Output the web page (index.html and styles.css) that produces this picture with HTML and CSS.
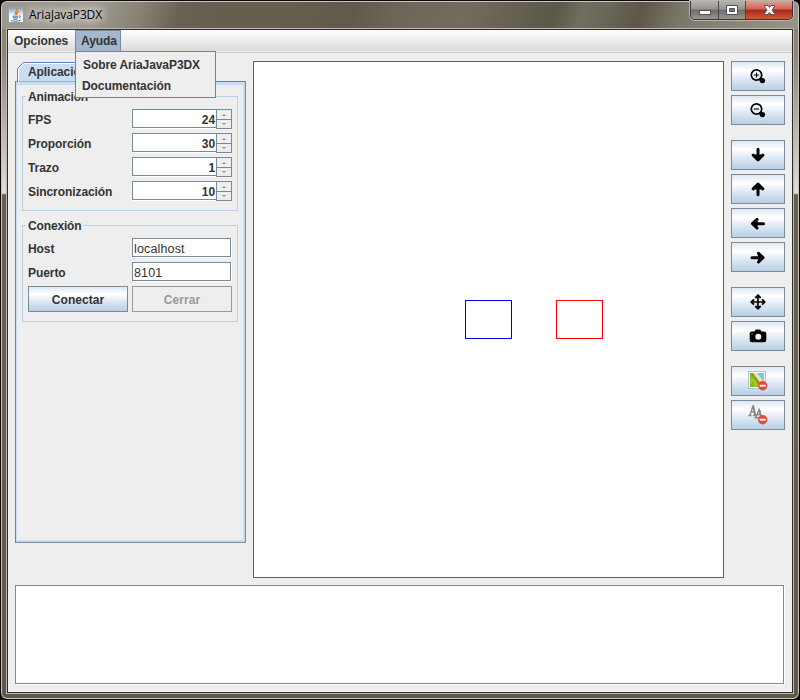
FILE: index.html
```html
<!DOCTYPE html>
<html lang="es">
<head>
<meta charset="utf-8">
<title>AriaJavaP3DX</title>
<link rel="stylesheet" href="styles.css">
</head>
<body>
<div class="window">
  <header class="titlebar">
    <svg class="app-icon" width="16" height="16" viewBox="0 0 16 16">
      <defs><linearGradient id="ic" x1="0" y1="0" x2="0" y2="1"><stop offset="0" stop-color="#7d9ab2"/><stop offset=".5" stop-color="#f4f7f9"/><stop offset="1" stop-color="#fff"/></linearGradient></defs>
      <rect x=".5" y=".5" width="15" height="15" fill="url(#ic)" stroke="#8ba3b5"/>
      <path d="M8.500 2C10 4 6 5 7.500 8M10.500 4.500C8.500 5.500 8.500 6.500 9 8" fill="none" stroke="#e8842c" stroke-width="1.500"/>
      <path d="M4.500 9.200h6M5 10.800h5M5.500 12.200h4M3 13.500c3 1 7 1 9.500-.3M11 9c2-.8 2 1.500 0 2" fill="none" stroke="#4f7594" stroke-width="1"/>
    </svg>
    <span class="title">AriaJavaP3DX</span>
    <div class="controls">
      <div class="ctl ctl-min"><svg width="28" height="18"><rect x="8.500" y="9.500" width="11" height="4" fill="#fff" stroke="#51505f"/></svg></div>
      <div class="ctl ctl-max"><svg width="27" height="18"><path d="M7.500 4.500h11v9h-11zM10.500 7.500v3h5v-3z" fill="#fff" fill-rule="evenodd" stroke="#51505f"/></svg></div>
      <div class="ctl ctl-close"><svg width="46" height="18"><path d="M18.500 4.500h3.500l1.500 2 1.500-2h3.500v1l-2.500 3.500 2.500 3.500v1H25l-1.500-2-1.500 2h-3.500v-1L21 9l-2.500-3.500z" fill="#fff" stroke="#5b4a57"/></svg></div>
    </div>
  </header>
  <div class="client">
    <nav class="menubar">
      <div class="menu menu-options">Opciones</div>
      <div class="menu menu-help">Ayuda
        <div class="popup">
          <div class="item item-about">Sobre AriaJavaP3DX</div>
          <div class="item item-docs">Documentación</div>
        </div>
      </div>
    </nav>
    <main class="workspace">
      <aside class="side">
        <div class="tab"><svg width="90" height="20"><path d="M.5 20V6.500L6.500.5H90V20z" fill="#c8ddf2" stroke="#6382bf"/><path d="M1.500 20V7L7 1.500H90" fill="none" stroke="#fff"/></svg><span>Aplicación</span></div>
        <div class="tabpane">
          <section class="group animation">
            <h2>Animación</h2>
            <div class="row"><label>FPS</label><div class="spinner"><div class="value">24</div><div class="arrows"><i></i><i></i></div></div></div>
            <div class="row"><label>Proporción</label><div class="spinner"><div class="value">30</div><div class="arrows"><i></i><i></i></div></div></div>
            <div class="row"><label>Trazo</label><div class="spinner"><div class="value">1</div><div class="arrows"><i></i><i></i></div></div></div>
            <div class="row"><label>Sincronización</label><div class="spinner"><div class="value">10</div><div class="arrows"><i></i><i></i></div></div></div>
          </section>
          <section class="group connection">
            <h2>Conexión</h2>
            <div class="row"><label>Host</label><div class="field">localhost</div></div>
            <div class="row"><label>Puerto</label><div class="field">8101</div></div>
            <div class="actions"><div class="button connect"><span>Conectar</span></div><div class="button disabled"><span>Cerrar</span></div></div>
          </section>
        </div>
      </aside>
      <div class="canvas">
        <svg width="469" height="515"><rect x="211.500" y="238.500" width="46" height="38" fill="none" stroke="#0000f0"/><rect x="302.500" y="238.500" width="46" height="38" fill="none" stroke="#f00"/></svg>
      </div>
      <div class="tools">
        <div class="button tool"><svg width="16" height="16" viewBox="0 0 16 16"><circle cx="6.500" cy="7" r="5.200" fill="none" stroke="#000" stroke-width="1.700"/><path d="M3.900 7h5.200M6.500 4.400v5.200" stroke="#000" stroke-width="1.100"/><path d="M10 10.500l2 2" stroke="#000" stroke-width="3.600"/><circle cx="12.400" cy="12.600" r="2.700"/></svg></div>
        <div class="button tool"><svg width="16" height="16" viewBox="0 0 16 16"><circle cx="6.500" cy="7" r="5.200" fill="none" stroke="#000" stroke-width="1.700"/><path d="M3.900 7h5.200" stroke="#000" stroke-width="1.100"/><path d="M10 10.500l2 2" stroke="#000" stroke-width="3.600"/><circle cx="12.400" cy="12.600" r="2.700"/></svg></div>
        <div class="button tool gap"><svg width="16" height="16" viewBox="0 0 16 16"><path d="M8 2.300v10M3.200 8.200L8 12.800l4.800-4.600M5 9h6" fill="none" stroke="#000" stroke-width="3" stroke-linecap="round" stroke-linejoin="round"/></svg></div>
        <div class="button tool"><svg width="16" height="16" viewBox="0 0 16 16"><path d="M8 13.700v-10M3.200 7.800L8 3.200l4.800 4.600M5 7h6" fill="none" stroke="#000" stroke-width="3" stroke-linecap="round" stroke-linejoin="round"/></svg></div>
        <div class="button tool"><svg width="16" height="16" viewBox="0 0 16 16"><path d="M13.500 8.700h-10M7 4.400L2.500 8.700 7 13M6.200 6v5" fill="none" stroke="#000" stroke-width="3" stroke-linecap="round" stroke-linejoin="round"/></svg></div>
        <div class="button tool"><svg width="16" height="16" viewBox="0 0 16 16"><path d="M2 8.700h10M8.500 4.400L13 8.700 8.500 13M9.300 6v5" fill="none" stroke="#000" stroke-width="3" stroke-linecap="round" stroke-linejoin="round"/></svg></div>
        <div class="button tool gap"><svg width="16" height="16" viewBox="0 0 16 16"><path d="M8 1.500v13M1.500 8h13" stroke="#000" stroke-width="1.700"/><path d="M5.300 4L8 1.300 10.700 4M5.300 12L8 14.700l2.700-2.700M4 5.300L1.300 8 4 10.700M12 5.300L14.700 8 12 10.700" fill="none" stroke="#000" stroke-width="1.800"/></svg></div>
        <div class="button tool"><svg width="18" height="16" viewBox="0 0 18 16"><path d="M3 3.500h2.500L6.800 1.500h4.400l1.300 2H15q2.300 0 2.300 2V12q0 2.300-2.300 2.300H3Q.7 14.300.7 12V5.500q0-2 2.300-2z"/><circle cx="9.300" cy="8.700" r="3" fill="#edf4fa"/><circle cx="3" cy="5.800" r=".6" fill="#edf4fa"/></svg></div>
        <div class="button tool gap"><svg width="20" height="20" viewBox="0 0 20 20"><rect x=".5" y="0.500" width="17" height="17" fill="#fff" stroke="#a4c7d9"/><path d="M2 2h14v14H2z" fill="#69ad28"/><path d="M7 2h9v12z" fill="#75c7ed"/><path d="M5 2h4l7 9v6z" fill="#f8dfa6"/><path d="M2 2h3l8 12v2H2z" fill="#86bd18"/><path d="M2 13l5-8M7 16V8M2 7l9 9" stroke="#c3d446" stroke-width=".8"/><path d="M3.500 3l9 11" stroke="#bf5826"/><circle cx="14.700" cy="14.700" r="4.700" fill="#e44a3b"/><path d="M11.700 14.700h6" stroke="#fff" stroke-width="1.800"/></svg></div>
        <div class="button tool"><svg width="20" height="20" viewBox="0 0 20 20"><g fill="none" stroke="#888" stroke-width="1.400"><path d="M.5 10.500h3M5 10.500h3.500M2 10L5 .8 7 10.500M3.300 6.800h3M5.500.8l2 9"/><path d="M6.500 12.800h3M9.500 12.800h4M8 12.500l3-8 2 8M9 9.500h4M11.500 4.500l2 8"/></g><circle cx="14.700" cy="14.700" r="4.700" fill="#e44a3b"/><path d="M11.700 14.700h6" stroke="#fff" stroke-width="1.800"/></svg></div>
      </div>
    </main>
    <div class="console"></div>
  </div>
</div>
</body>
</html>
```
FILE: styles.css
```css
* { box-sizing: border-box; }
html, body { margin: 0; background: #0a0a0a; }
body { width: 800px; height: 700px; overflow: hidden; color: #333; font: bold 12px/16px "Liberation Sans", Arial, sans-serif; letter-spacing: -.07px; }
svg { display: block; flex: none; }
.window {
  width: 800px; height: 700px; padding: 0 6px 5px; border: 1px solid #0b090b; border-radius: 7px;
  box-shadow: inset 0 0 0 1px #cbc7be;
  background:
    linear-gradient(110deg, #9c978c 0, #a09b90 90px, #878176 135px, #6a6355 170px, #665f50 210px, #665f50 270px, #5f5a4b 335px, #6b6558 370px, #736b60 440px, #5b5848 525px, #716d60 550px, #69655a 575px, #5c5748 605px, #7d786c 645px, #8a867a 700px, #99958a) 0 0 / 100% 28px no-repeat,
    linear-gradient(#8b8377, #8b8377 50px, #e0dcd8 192px, #665f50 194px, #665f50 400px, #5d5848);
}
.titlebar { display: flex; height: 27px; padding: 6px 0 0 1px; }
.title { margin: 0 0 0 5px; color: #000; font: 12px/16px "Open Sans", "Liberation Sans", sans-serif; text-shadow: 0 0 8px #fff, 0 0 10px #eee, 0 0 14px #ccc; letter-spacing: -.12px; }
.controls { display: flex; height: 19px; margin: -6px 0 0 auto; border: 1px solid #38363a; border-top: 0; border-radius: 0 0 5px 5px; box-shadow: 0 0 0 1px #b9b5ab; overflow: hidden; }
.ctl { border-right: 1px solid #45434a; background: linear-gradient(#b5b3ae, #96948f 45%, #6e6c67 50%, #99968c); }
.ctl-min { width: 28px; }
.ctl-max { width: 27px; }
.ctl-close { width: 46px; border: 0; background: linear-gradient(#dfa092, #c96651 45%, #aa281a 50%, #cf5838); }
.client { display: flex; flex-direction: column; width: 786px; height: 664px; border: 1px solid #2f2d29; outline: 1px solid #bdb9ae; margin-top: 1px; background: #eee; }
.menubar { display: flex; flex: none; height: 23px; background: linear-gradient(#fff, #dadada 21px, #eee 21px, #eee 22px, #ccc 22px); }
.menu { height: 21px; padding: 3px 0 0 6px; white-space: nowrap; }
.menu-options { width: 67px; }
.menu-help { position: relative; z-index: 2; width: 46px; padding: 2px 0 0 5px; border: 1px solid #7a8a99; border-width: 1px 1px 0; background: #a3b8cc; }
.popup { position: absolute; left: -1px; top: 20px; width: 141px; height: 47px; padding: 5px 0 0 7px; border: 1px solid #6382bf; background: #eee; }
.item { height: 21px; }
.item-docs { margin-left: -1px; }
.workspace { display: flex; flex: none; height: 532px; padding: 8px 7px; }
.side { width: 231px; height: 482px; padding-top: 1px; margin-right: 7px; }
.tab { display: flex; height: 19px; margin-left: 2px; }
.tab span { margin: 2px 0 0 -79px; }
.tabpane { height: 462px; padding: 11px 4px 0; border: 1px solid #7a8a99; border-left-color: #6382bf; border-top-color: #6382bf; box-shadow: inset 0 3px #c8ddf2, inset -2px -2px #c8ddf2, inset 1px 0 #c8ddf2; }
.group { width: 216px; margin: 3px 0 0 2px; padding: 0 5px; border: 1px solid #b8cfe5; }
.group h2 { width: max-content; height: 16px; margin: -8px 0 4px -2px; padding: 0 2px; background: #eee; font: inherit; letter-spacing: -.15px; }
.animation { height: 115px; }
.connection { height: 97px; margin-top: 14px; }
.row { display: flex; height: 24px; }
.row label { width: 104px; padding-top: 3px; }
.spinner { display: flex; width: 100px; height: 20px; }
.value { width: 84px; height: 19px; border: 1px solid #7a8a99; border-right: 0; background: #fff; box-shadow: 0 1px #fff; text-align: right; line-height: 20px; padding-right: 1px; }
.arrows { width: 16px; height: 20px; border: 1px solid #7a8a99; }
.arrows i { display: flex; height: 9px; justify-content: center; align-items: center; }
.arrows i::before { content: ""; border: 2px solid transparent; border-bottom: 2px solid #7a8a99; border-top: 0; }
.arrows i + i { border-top: 1px solid #7a8a99; }
.arrows i + i::before { transform: rotate(180deg); }
.field { width: 99px; height: 19px; padding-left: 1px; border: 1px solid #7a8a99; background: #fff; box-shadow: 1px 1px #fff; font-weight: normal; font-size: 12.500px; letter-spacing: .15px; line-height: 20px; }
.actions { display: flex; gap: 4px; }
.button { display: flex; align-items: center; justify-content: center; border: 1px solid #7a8a99; background: linear-gradient(#dde8f3, #fff 30%, #dde8f3 60%, #b8cfe5); }
.actions .button { width: 100px; height: 26px; padding-top: 1px; letter-spacing: .05px; }
.actions .disabled { border-color: #999; background: #eee; color: #999; }
.canvas { width: 471px; height: 517px; border: 1px solid #5f5f5f; background: #fff; }
.tools { display: flex; flex-direction: column; margin-left: 7px; }
.tool { width: 54px; height: 30px; margin-bottom: 4px; }
.gap { margin-top: 11px; }
.console { width: 769px; height: 99px; margin-left: 7px; border: 1px solid #7a8a99; background: #fff; box-shadow: 1px 1px #fff; }
```
